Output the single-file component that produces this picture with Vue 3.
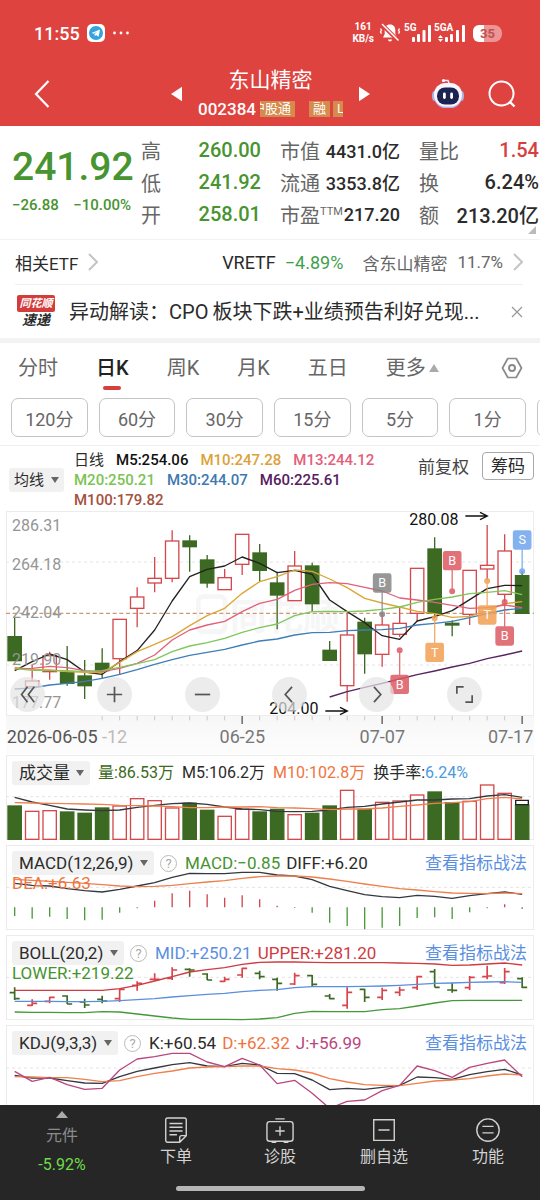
<template>
    <div class="app">
        <header class="header">
            <div class="status-bar">
                <span class="clock">11:55</span>
                <svg class="telegram" viewBox="0 0 18 18">
                    <rect width="18" height="18" rx="5" fill="#fff" />
                    <circle cx="9" cy="9" r="7" fill="#35a3dc" />
                    <path d="M4.6 9 L13 5.4 L11.6 12.8 L9 11 L7.8 12.2 L7.5 10.1 L10.8 7.3 L6.6 9.8 Z" fill="#fff" />
                </svg>
                <svg class="dots" viewBox="0 0 18 4" fill="#fff">
                    <circle cx="2.5" cy="2" r="1.4" />
                    <circle cx="9" cy="2" r="1.4" />
                    <circle cx="15.5" cy="2" r="1.4" />
                </svg>
                <span class="speed">161<br>KB/s</span>
                <svg class="bell" viewBox="0 0 22 20">
                    <path d="M11 1.500c-3.600 0-5.300 2.500-5.300 5.500v4L4 14.500h14L16.300 11V7c0-3-1.700-5.500-5.300-5.500z" fill="#fff" />
                    <path d="M9 16.500h4a2 2 0 0 1-4 0z" fill="#fff" />
                    <path d="M2.500 1 L19.500 18" stroke="#de433f" stroke-width="4" />
                    <path d="M3 1 L19.500 17.500" stroke="#fff" stroke-width="1.500" />
                    <path d="M1.500 5.500l1 1.700-1 1.700 1 1.700M20.500 5.500l-1 1.700 1 1.700-1 1.700" fill="none" stroke="#fff" stroke-width="1.300" />
                </svg>
                <svg class="signal" viewBox="0 0 29 20" fill="#fff">
                    <text x="0" y="8" class="net">5G</text>
                    <rect x="8" y="14" width="3" height="5" rx="1" />
                    <rect x="13" y="11" width="3" height="8" rx="1" />
                    <rect x="18.500" y="7" width="3" height="12" rx="1" />
                    <rect x="24" y="2" width="3" height="17" rx="1" />
                </svg>
                <svg class="signal wide" viewBox="0 0 32 20" fill="#fff">
                    <text x="0" y="8" class="net">5GA</text>
                    <path d="M4 15l2.500-3 2.500 3zM4 16l2.500 3 2.500-3z" />
                    <rect x="11" y="14" width="3" height="5" rx="1" />
                    <rect x="16" y="11" width="3" height="8" rx="1" />
                    <rect x="22" y="7" width="3" height="12" rx="1" />
                    <rect x="28" y="2" width="3" height="17" rx="1" />
                </svg>
                <span class="battery">35</span>
            </div>
            <div class="title-bar">
                <button type="button" class="icon-btn back" aria-label="返回">
                    <svg viewBox="0 0 16 28" fill="none" stroke="#fff" stroke-width="2.200">
                        <path d="M14.500 1 L2 14 L14.500 27" />
                    </svg>
                </button>
                <div class="stock">
                    <button type="button" class="icon-btn arrow" aria-label="上一只">
                        <svg viewBox="0 0 12 18" fill="#fff"><path d="M12 1v16L0 9z" /></svg>
                    </button>
                    <div class="stock-name">
                        <h1>东山精密</h1>
                        <div class="stock-code">
                            <span>002384</span>
                            <div class="tags">
                                <span class="tag first"><span>沪股通</span></span>
                                <span class="tag">融</span>
                                <span class="tag">L</span>
                            </div>
                        </div>
                    </div>
                    <button type="button" class="icon-btn arrow" aria-label="下一只">
                        <svg viewBox="0 0 12 18" fill="#fff"><path d="M0 1v16L12 9z" /></svg>
                    </button>
                </div>
                <button type="button" class="icon-btn robot" aria-label="智能助手">
                    <svg viewBox="0 0 34 32">
                        <path d="M13 2.500h4l1.500 4" fill="none" stroke="#f3e9f5" stroke-width="1.600" />
                        <circle cx="12.500" cy="2.500" r="1.600" fill="#fff" />
                        <ellipse cx="3.500" cy="18" rx="2.500" ry="5" fill="#a9b4ea" />
                        <ellipse cx="30.500" cy="18" rx="2.500" ry="5" fill="#a9b4ea" />
                        <rect x="3" y="6" width="28" height="24" rx="11.500" fill="#b9b2ee" />
                        <rect x="3" y="5" width="28" height="23.500" rx="11.500" fill="#f8f5fd" />
                        <rect x="6" y="9.500" width="22" height="17" rx="8" fill="#1b2350" />
                        <rect x="12" y="14.500" width="2.800" height="6.500" rx="1.400" fill="#fff" />
                        <rect x="19.200" y="14.500" width="2.800" height="6.500" rx="1.400" fill="#fff" />
                    </svg>
                </button>
                <button type="button" class="icon-btn search" aria-label="搜索">
                    <svg viewBox="0 0 28 28" fill="none" stroke="#fff" stroke-width="2">
                        <circle cx="13.500" cy="13.500" r="12" />
                        <path d="M22 22 L26.500 26.500" stroke-width="2.400" />
                    </svg>
                </button>
            </div>
        </header>

        <main class="content">
            <section class="quote">
                <div class="price">
                    <strong>241.92</strong>
                    <div class="change"><span>−26.88</span><span>−10.00%</span></div>
                </div>
                <dl class="stats">
                    <div v-for="item in stats" :key="item.label" class="stat">
                        <dt>{{ item.label }}<sup v-if="item.sup">{{ item.sup }}</sup></dt>
                        <dd :class="item.tone">{{ item.value }}</dd>
                    </div>
                </dl>
                <svg class="corner" viewBox="0 0 8 8"><path d="M8 0v8H0z" fill="#bbb" /></svg>
            </section>

            <a href="#" class="etf">
                <span class="etf-title">相关ETF</span>
                <svg class="chevron" viewBox="0 0 10 18"><path d="M1 1l8 8-8 8" /></svg>
                <span class="etf-name">VRETF</span>
                <span class="etf-change">−4.89%</span>
                <span class="etf-hold">含东山精密</span>
                <span class="etf-hold">11.7%</span>
                <svg class="chevron" viewBox="0 0 10 18"><path d="M1 1l8 8-8 8" /></svg>
            </a>

            <div class="news">
                <div class="news-logo">
                    <span class="logo-top">同花顺</span>
                    <span class="logo-bottom">速递</span>
                </div>
                <a href="#" class="news-text">异动解读：<span class="latin">CPO</span>板块下跌+业绩预告利好兑现...</a>
                <button type="button" class="icon-btn close" aria-label="关闭">
                    <svg viewBox="0 0 12 12" stroke="#999" stroke-width="1.300"><path d="M1 1l10 10M11 1L1 11" /></svg>
                </button>
            </div>

            <nav class="tabs">
                <button v-for="tab in tabs" :key="tab" type="button" :class="{ active: tab === activeTab }"
                    @click="activeTab = tab">{{ tab }}</button>
                <button type="button" class="more">更多<i></i></button>
                <button type="button" class="icon-btn setting" aria-label="设置">
                    <svg viewBox="0 0 22 22" fill="none" stroke="#8a8a8a">
                        <path d="M6.800 1.500h8.400l5.300 9.500-5.300 9.500H6.800L1.500 11z" stroke-width="1.700" stroke-linejoin="round" />
                        <circle cx="11" cy="11" r="3" stroke-width="2" />
                    </svg>
                </button>
            </nav>

            <div class="intervals">
                <button v-for="item in intervals" :key="item" type="button">{{ item }}</button>
                <button type="button" class="next" aria-label="更多周期"></button>
            </div>

            <div class="ma-bar">
                <div class="picker">
                    <select aria-label="主图指标"><option>均线</option></select>
                </div>
                <div class="ma-list">
                    <span class="period">日线</span>
                    <span v-for="ma in averages" :key="ma.key" :class="ma.key">{{ ma.text }}</span>
                </div>
                <button type="button" class="adjust">前复权</button>
                <button type="button" class="chips">筹码</button>
            </div>

            <!-- Candles -->
            <section class="panel">
                <svg class="plot" viewBox="18 18 1584 615">
                    <g class="watermark">
                        <rect x="595" y="275" width="80" height="105" rx="14" />
                        <text x="690" y="375">同花顺</text>
                    </g>
                    <path class="grid" d="M18 171H1602M18 480H1602" />
                    <path class="last-price" d="M18 325H1602" />
                    <g v-for="(c, i) in candles" :key="i" :class="c[0] === 'r' ? 'up' : 'down'">
                        <path :d="wick(c, i)" />
                        <rect :x="x(i) - 20" :y="c[2]" width="40" :height="c[3] - c[2]" />
                    </g>
                    <polyline v-for="line in priceLines" :key="line.color" class="line" :stroke="line.color"
                        :points="points(line.values, line.start)" />
                    <g v-for="(s, i) in signals" :key="'s' + i" class="signal-mark" :fill="s.color" :stroke="s.color">
                        <path :d="`M${x(s.at)} ${s.dot}V${s.box + 27}`" />
                        <circle :cx="x(s.at)" :cy="s.dot" r="7" />
                        <rect :x="x(s.at) - 26" :y="s.box" width="52" height="54" rx="5" />
                        <text :x="x(s.at)" :y="s.box + 40">{{ s.text }}</text>
                    </g>
                    <g class="scale">
                        <text x="36" y="78">286.31</text>
                        <text x="36" y="195">264.18</text>
                        <text x="36" y="338">242.04</text>
                        <text x="36" y="479">219.90</text>
                        <text x="36" y="608">177.77</text>
                    </g>
                    <g class="extreme">
                        <text x="1228" y="61">280.08</text>
                        <path d="M1396 33H1460M1440 22L1462 33L1440 44" />
                        <text x="808" y="628">204.00</text>
                        <path d="M976 618H1040M1020 607L1042 618L1020 629" />
                    </g>
                </svg>
                <div class="tools">
                    <button v-for="tool in tools" :key="tool.label" type="button" :aria-label="tool.label">
                        <svg viewBox="0 0 20 20"><path :d="tool.path" /></svg>
                    </button>
                </div>
            </section>

            <svg class="axis" viewBox="18 633 1584 114">
                <path v-for="i in 25" :key="i" :d="`M${x(i + 4)} 633v${majors.includes(i + 4) ? 24 : 13}`"
                    :class="{ major: majors.includes(i + 4) }" />
                <text x="20" y="715">2026-06-05</text>
                <text x="306" y="715" class="faded">-12</text>
                <text x="727" y="715" text-anchor="middle" class="mid">06-25</text>
                <text x="1147" y="715" text-anchor="middle" class="mid">07-07</text>
                <text x="1600" y="715" text-anchor="end" class="mid">07-17</text>
            </svg>

            <!-- Volume -->
            <section class="panel">
                <svg class="plot" viewBox="18 15 1584 255">
                    <path class="grid" d="M18 140H1602" />
                    <rect v-for="(v, i) in volumes" :key="i" :class="candles[i][0] === 'r' ? 'up' : 'down'"
                        :x="x(i) - 20" :y="v" width="40" :height="268 - v" />
                    <path d="M1547 164V151H1585V164Z" fill="#fff" stroke="#222" stroke-width="4" />
                    <polyline class="line" stroke="#34383f" :points="points(volumeM5)" />
                    <polyline class="line" stroke="#ef7f4d" :points="points(volumeM10)" />
                </svg>
                <div class="legend volume">
                    <div class="picker"><select aria-label="成交量指标"><option>成交量</option></select></div>
                    <span class="dark-green">量:86.53万</span>
                    <span>M5:106.2万</span>
                    <span class="orange">M10:102.8万</span>
                    <span>换手率:<b>6.24%</b></span>
                </div>
            </section>

            <!-- MACD -->
            <section class="panel">
                <svg class="plot" viewBox="18 285 1584 255">
                    <path class="grid" d="M18 412H1602" />
                    <path v-for="(v, i) in macdBars" :key="i" :d="`M${x(i)} 472V${v}`" stroke-width="4"
                        :stroke="v > 472 ? '#4b9a3c' : '#cf4750'" />
                    <polyline class="line" stroke="#34383f" :points="points(diff)" />
                    <polyline class="line" stroke="#ef7f4d" :points="points(dea)" />
                </svg>
                <div class="legend">
                    <div class="picker"><select aria-label="MACD 参数"><option>MACD(12,26,9)</option></select></div>
                    <button type="button" class="help">?</button>
                    <span class="green">MACD:−0.85</span>
                    <span>DIFF:+6.20</span>
                    <a href="#">查看指标战法</a>
                    <span class="second orange">DEA:+6.63</span>
                </div>
            </section>

            <!-- BOLL -->
            <section class="panel">
                <svg class="plot" viewBox="18 15 1584 255">
                    <path class="grid" d="M18 142H1602" />
                    <path v-for="(b, i) in bollBars" :key="i" :d="ohlc(b, i)" fill="none" stroke-width="5"
                        :stroke="candles[i][0] === 'r' ? '#d9434a' : '#3c6a22'" />
                    <polyline class="line" stroke="#cf3b40" :points="points(upper)" />
                    <polyline class="line" stroke="#5a8fe0" :points="points(mid)" />
                    <polyline class="line" stroke="#45993a" :points="points(lower)" />
                </svg>
                <div class="legend">
                    <div class="picker"><select aria-label="BOLL 参数"><option>BOLL(20,2)</option></select></div>
                    <button type="button" class="help">?</button>
                    <span class="blue">MID:+250.21</span>
                    <span class="red">UPPER:+281.20</span>
                    <a href="#">查看指标战法</a>
                    <span class="second green">LOWER:+219.22</span>
                </div>
            </section>

            <!-- KDJ -->
            <section class="panel">
                <svg class="plot" viewBox="18 285 1584 255">
                    <path class="grid" d="M18 414H1602" />
                    <polyline class="line" stroke="#34383f" :points="points(kLine)" />
                    <polyline class="line" stroke="#ef7f4d" :points="points(dLine)" />
                    <polyline class="line" stroke="#b9477f" :points="points(jLine)" />
                </svg>
                <div class="legend">
                    <div class="picker"><select aria-label="KDJ 参数"><option>KDJ(9,3,3)</option></select></div>
                    <button type="button" class="help">?</button>
                    <span>K:+60.54</span>
                    <span class="orange">D:+62.32</span>
                    <span class="magenta">J:+56.99</span>
                    <a href="#">查看指标战法</a>
                </div>
            </section>
        </main>

        <footer class="bottom">
            <div class="actions">
                <button type="button" class="sector">
                    <i></i>
                    <span>元件</span>
                    <em>-5.92%</em>
                </button>
                <button v-for="action in actions" :key="action.label" type="button">
                    <svg viewBox="0 0 30 28"><path :d="action.path" /></svg>
                    <span>{{ action.label }}</span>
                </button>
            </div>
            <div class="home-bar"></div>
        </footer>
    </div>
</template>

<script setup>
import { ref } from 'vue';

const activeTab = ref('日K');
const tabs = ['分时', '日K', '周K', '月K', '五日'];
const intervals = ['120分', '60分', '30分', '15分', '5分', '1分'];

const stats = [
    { label: '高', value: '260.00', tone: 'fall' },
    { label: '市值', value: '4431.0亿', tone: 'small' },
    { label: '量比', value: '1.54', tone: 'rise' },
    { label: '低', value: '241.92', tone: 'fall' },
    { label: '流通', value: '3353.8亿', tone: 'small' },
    { label: '换', value: '6.24%' },
    { label: '开', value: '258.01', tone: 'fall' },
    { label: '市盈', sup: 'TTM', value: '217.20', tone: 'small' },
    { label: '额', value: '213.20亿' },
];

const averages = [
    { key: 'm5', text: 'M5:254.06' },
    { key: 'm10', text: 'M10:247.28' },
    { key: 'm13', text: 'M13:244.12' },
    { key: 'm20', text: 'M20:250.21' },
    { key: 'm30', text: 'M30:244.07' },
    { key: 'm60', text: 'M60:225.61' },
    { key: 'm100', text: 'M100:179.82' },
];

// Plot units: three per pixel, one candle every 52.5
const x = (i) => 44 + i * 52.5;
const points = (values, start = 0) => values.map((v, i) => `${x(i + start)},${v}`).join(' ');
const wick = (c, i) => `M${x(i)} ${c[1]}V${c[2]}M${x(i)} ${c[3]}V${c[4]}`;
const ohlc = (b, i) => `M${x(i)} ${b[1]}V${b[2]}M${x(i) - 15} ${b[0]}H${x(i)}M${x(i)} ${b[3]}H${x(i) + 15}`;

// [direction, high, body top, body bottom, low]
const candles = [
    ['g', 335, 395, 467, 467], ['r', 478, 528, 545, 545], ['r', 440, 452, 500, 524], ['g', 423, 502, 535, 542],
    ['g', 465, 513, 542, 582], ['g', 430, 475, 497, 520], ['r', 343, 343, 461, 510], ['r', 247, 276, 310, 367],
    ['r', 156, 220, 234, 262], ['r', 76, 108, 220, 232], ['g', 91, 108, 125, 200], ['g', 150, 165, 234, 248],
    ['r', 192, 218, 254, 254], ['r', 88, 88, 178, 210], ['g', 117, 144, 196, 228], ['g', 200, 234, 270, 373],
    ['r', 138, 183, 287, 287], ['g', 173, 183, 296, 320], ['g', 408, 436, 466, 466], ['r', 325, 390, 542, 590],
    ['g', 338, 352, 446, 506], ['r', 325, 360, 448, 485], ['r', 305, 355, 388, 395], ['r', 190, 190, 325, 350],
    ['g', 97, 132, 325, 340], ['g', 346, 355, 360, 394], ['r', 196, 196, 328, 360], ['r', 60, 181, 192, 225],
    ['r', 88, 138, 268, 290], ['g', 199, 212, 325, 325],
];

const priceLines = [
    { color: '#222222', values: [497, 470, 447, 464, 501, 508, 470, 437, 375, 288, 215, 193, 183, 156, 175, 203, 196, 208, 285, 320, 353, 392, 403, 348, 335, 317, 284, 251, 241, 242] },
    { color: '#dba637', values: [487, 493, 495, 500, 502, 503, 472, 440, 418, 395, 362, 332, 310, 265, 230, 215, 195, 199, 222, 248, 280, 294, 306, 319, 326, 337, 334, 317, 296, 290] },
    { color: '#e2607a', values: [492, 490, 484, 488, 497, 500, 490, 475, 450, 405, 375, 360, 349, 320, 295, 283, 256, 238, 233, 236, 247, 258, 279, 285, 292, 301, 310, 308, 300, 308] },
    { color: '#7fc75b', values: [490, 496, 496, 497, 500, 497, 487, 476, 464, 440, 423, 413, 400, 382, 368, 357, 332, 320, 319, 320, 318, 313, 306, 292, 283, 276, 266, 262, 257, 269] },
    { color: '#3f7fb8', values: [552, 549, 540, 535, 529, 520, 508, 494, 478, 464, 451, 442, 433, 420, 408, 402, 390, 383, 382, 377, 375, 374, 370, 360, 355, 349, 338, 326, 315, 310] },
    { color: '#56265f', start: 18, values: [576, 560, 547, 535, 522, 509, 498, 486, 475, 461, 450, 438] },
];

const signals = [
    { at: 21, dot: 328, box: 207, text: 'B', color: '#858585' },
    { at: 22, dot: 436, box: 511, text: 'B', color: '#dc5a62' },
    { at: 24, dot: 340, box: 415, text: 'T', color: '#f2a054' },
    { at: 25, dot: 259, box: 140, text: 'B', color: '#dc5a62' },
    { at: 27, dot: 228, box: 303, text: 'T', color: '#f2a054' },
    { at: 28, dot: 291, box: 366, text: 'B', color: '#dc5a62' },
    { at: 29, dot: 199, box: 78, text: 'S', color: '#6fa5ec' },
];

const tools = [
    { label: '最左', path: 'M10 1L3 10L10 19M18 1L11 10L18 19' },
    { label: '放大', path: 'M10 1V19M1 10H19' },
    { label: '缩小', path: 'M1 10H19' },
    { label: '左移', path: 'M13 1L5 10L13 19' },
    { label: '右移', path: 'M7 1L15 10L7 19' },
    { label: '全屏', path: 'M1 9V1H9M19 11V19H11' },
];

const majors = [13, 21, 29];

const volumes = [168, 184, 182, 186, 190, 174, 168, 146, 152, 174, 160, 181, 199, 178, 186, 178, 194, 190, 168, 121, 178, 157, 153, 135, 126, 158, 154, 105, 130, 165];
const volumeM5 = [142, 156, 166, 177, 180, 182, 180, 172, 166, 161, 159, 163, 171, 177, 179, 184, 185, 184, 180, 172, 169, 162, 156, 150, 150, 147, 146, 138, 134, 142];
const volumeM10 = [158, 159, 160, 161, 162, 163, 166, 167, 168, 170, 173, 173, 171, 171, 170, 173, 174, 176, 179, 177, 177, 174, 169, 165, 160, 158, 155, 146, 142, 147];

const macdBars = [498, 506, 500, 507, 511, 509, 488, 475, 452, 430, 422, 433, 443, 436, 448, 467, 474, 488, 518, 528, 538, 533, 528, 504, 502, 507, 487, 475, 463, 477];
const diff = [400, 406, 408, 416, 422, 426, 418, 408, 398, 382, 370, 371, 371, 367, 367, 375, 378, 389, 409, 422, 434, 440, 443, 436, 439, 445, 437, 431, 426, 433];
const dea = [388, 391, 394, 397, 400, 404, 408, 410, 409, 406, 401, 396, 392, 385, 380, 378, 378, 381, 387, 394, 402, 409, 416, 420, 425, 429, 430, 431, 429, 431];

// [open, high, low, close]
const bollBars = [
    [188, 172, 210, 206], [226, 208, 228, 220], [214, 200, 220, 202], [198, 196, 222, 222], [216, 206, 234, 225],
    [208, 197, 220, 213], [206, 176, 216, 178], [166, 154, 182, 160], [148, 130, 152, 148], [145, 112, 150, 120],
    [118, 115, 140, 120], [132, 130, 150, 150], [154, 140, 156, 148], [135, 113, 143, 115], [130, 122, 148, 140],
    [148, 143, 182, 160], [162, 128, 165, 137], [137, 135, 168, 163], [198, 192, 208, 206], [226, 172, 236, 187],
    [178, 176, 216, 202], [202, 173, 210, 181], [187, 170, 198, 180], [173, 137, 180, 140], [125, 117, 172, 172],
    [180, 158, 188, 181], [173, 138, 180, 142], [140, 107, 148, 138], [158, 114, 162, 125], [146, 142, 174, 172],
];
const upper = [181, 181, 181, 181, 181, 181, 176, 166, 153, 140, 126, 119, 113, 103, 97, 96, 96, 97, 98, 98, 98, 98, 99, 100, 102, 106, 105, 102, 99, 105];
const mid = [214, 214, 214, 215, 215, 214, 212, 209, 206, 201, 197, 193, 190, 185, 181, 179, 173, 170, 170, 170, 169, 168, 166, 163, 160, 159, 157, 156, 155, 157];
const lower = [246, 247, 247, 248, 248, 245, 246, 252, 258, 264, 268, 268, 268, 269, 267, 263, 250, 244, 245, 245, 245, 239, 236, 228, 219, 212, 211, 211, 211, 211];

const kLine = [436, 444, 444, 452, 459, 460, 440, 424, 414, 404, 398, 408, 410, 400, 405, 430, 431, 450, 479, 475, 478, 472, 466, 441, 443, 448, 434, 425, 418, 435];
const dLine = [440, 441, 443, 443, 448, 455, 452, 440, 430, 423, 414, 411, 410, 408, 408, 416, 420, 429, 446, 456, 464, 466, 467, 460, 453, 450, 446, 438, 432, 435];
const jLine = [424, 454, 442, 464, 478, 475, 420, 387, 380, 370, 370, 396, 410, 385, 405, 461, 451, 490, 535, 514, 510, 482, 466, 408, 422, 442, 412, 400, 390, 440];

const actions = [
    { label: '下单', path: 'M6 1H24Q26 1 26 3V20L19 27H6Q4 27 4 25V3Q4 1 6 1ZM26 20H21Q19 20 19 22V27M8 7H22M8 11H22M8 15H22M8 19H16' },
    { label: '诊股', path: 'M4 5H26Q29 5 29 8V23Q29 26 26 26H4Q1 26 1 23V8Q1 5 4 5ZM10 2H20M15 10V20M10 15H20M6 27H11M19 27H24' },
    { label: '删自选', path: 'M4 3H26V25H4ZM9 14H21' },
    { label: '功能', path: 'M15 2A12 12 0 0 1 15 26A12 12 0 0 1 15 2ZM9 10H21M9 17H21' },
];
</script>

<style>
body {
    margin: 0;
    background: #fff;
}
</style>

<style scoped>
.app {
    display: flex;
    flex-direction: column;
    height: 100vh;
    overflow: hidden;
    background: #fff;
    color: #2b2b2b;
    font-family: Roboto, "Noto Sans CJK SC", sans-serif;
}

button,
select {
    margin: 0;
    padding: 0;
    border: none;
    background: none;
    color: inherit;
    font-family: inherit;
    cursor: pointer;
}

a {
    color: inherit;
    text-decoration: none;
}

svg {
    display: block;
}

.icon-btn svg {
    width: 100%;
    height: 100%;
}

/* Header */
.header {
    flex: none;
    height: 126px;
    background: #de433f;
    color: #fff;
}

.status-bar {
    display: flex;
    align-items: center;
    height: 66px;
    padding: 0 38px 0 34px;
}

.clock {
    font-size: 18px;
    font-weight: 500;
}

.telegram {
    width: 18px;
    margin-left: 7px;
}

.dots {
    width: 18px;
    margin: 0 auto 0 7px;
}

.speed {
    font-size: 10px;
    font-weight: 700;
    line-height: 12px;
    text-align: center;
}

.bell {
    width: 22px;
    margin-left: 5px;
}

.signal {
    width: 29px;
    margin-left: 3px;
}

.signal.wide {
    width: 32px;
    margin-left: 1px;
}

.net {
    font-size: 10px;
    font-weight: 700;
}

.battery {
    width: 29px;
    margin-left: 7px;
    border-radius: 6px 8px 8px 6px;
    background: linear-gradient(90deg, #fff 11px, #ee9494 11px);
    color: #bd5352;
    font-size: 13px;
    font-weight: 700;
    line-height: 17px;
    text-align: center;
}

.title-bar {
    display: flex;
    align-items: center;
    height: 56px;
    padding: 0 24px 0 34px;
}

.back {
    width: 16px;
    height: 28px;
}

.stock {
    display: flex;
    flex: 1;
    align-items: center;
    justify-content: center;
    gap: 16px;
    padding-left: 60px;
}

.arrow {
    width: 11px;
    height: 18px;
}

.stock-name h1 {
    margin: 0;
    font-size: 21px;
    font-weight: 400;
    line-height: 30px;
    text-align: center;
}

.stock-code {
    display: flex;
    align-items: center;
    gap: 4px;
    font-size: 17px;
    font-weight: 500;
    line-height: 28px;
}

.tags {
    display: flex;
    gap: 3px;
    width: 83px;
    overflow: hidden;
    white-space: nowrap;
}

.tag {
    flex: none;
    padding: 0 4px;
    background: #d58b4b;
    font-size: 13px;
    font-weight: 400;
    line-height: 16px;
}

.tag.first {
    display: flex;
    justify-content: flex-end;
    width: 31px;
    margin-right: 11px;
    padding-left: 0;
    overflow: hidden;
}

.robot {
    width: 34px;
    height: 32px;
    margin-right: 23px;
}

.search {
    width: 28px;
    height: 28px;
}

/* Quote */
.content {
    flex: 1;
    min-height: 0;
    overflow: hidden;
}

.quote {
    position: relative;
    display: flex;
    gap: 10px;
    height: 114px;
    padding: 0 1px 0 12px;
    border-bottom: 1px solid #f2f2f2;
    box-sizing: border-box;
}

.price {
    width: 119px;
    color: #479430;
}

.price strong {
    display: block;
    padding-top: 18px;
    font-size: 39px;
    font-weight: 500;
    line-height: 46px;
}

.change {
    display: flex;
    justify-content: space-between;
    font-size: 15px;
    font-weight: 500;
    line-height: 30px;
}

.stats {
    display: grid;
    flex: 1;
    grid-template-columns: repeat(3, 1fr);
    grid-auto-rows: 32px;
    column-gap: 19px;
    margin: 0;
    padding-top: 8px;
}

.stat {
    display: flex;
    align-items: center;
    justify-content: space-between;
    font-size: 20px;
    white-space: nowrap;
}

.stat dt {
    color: #666;
}

.stat sup {
    font-size: 11px;
    line-height: 11px;
}

.stat dd {
    margin: 0;
    font-weight: 500;
}

.stat .fall {
    color: #479430;
}

.stat .rise {
    color: #d63f3f;
}

.stat .small {
    font-size: 18px;
}

.corner {
    position: absolute;
    right: 4px;
    bottom: 5px;
    width: 8px;
}

.etf {
    display: flex;
    align-items: center;
    height: 44px;
    margin: 0 17px 0 15px;
    border-bottom: 1px solid #f0f0f0;
    font-size: 17px;
}

.chevron {
    width: 10px;
    height: 18px;
    margin-left: 10px;
    fill: none;
    stroke: #c4c4c4;
    stroke-width: 2;
}

.etf-name {
    margin-left: auto;
    font-size: 18px;
}

.etf-change {
    margin: 0 9px;
    color: #3f9f4d;
    font-size: 18px;
}

.etf-hold {
    margin-left: 10px;
    color: #666;
}

.news {
    display: flex;
    align-items: center;
    height: 53px;
    padding: 0 17px;
    border-bottom: 5px solid #f3f3f3;
}

.news-logo {
    width: 38px;
    font-weight: 700;
    font-style: italic;
    text-align: center;
}

.logo-top {
    display: block;
    border-radius: 2px;
    background: #d23c3b;
    color: #fff;
    font-size: 11px;
    line-height: 17px;
}

.logo-bottom {
    display: block;
    font-size: 14px;
    line-height: 16px;
}

.news-text {
    flex: 1;
    min-width: 0;
    margin-left: 14px;
    font-size: 20px;
    line-height: 28px;
    white-space: nowrap;
}

.news-text .latin {
    margin-right: 4px;
}

.close {
    width: 12px;
    height: 12px;
}

/* Period */
.tabs {
    display: flex;
    gap: 38px;
    height: 49px;
    padding: 0 17px 0 18px;
}

.tabs button {
    position: relative;
    color: #666;
    font-size: 20px;
    line-height: 48px;
    white-space: nowrap;
}

.tabs .active {
    color: #222;
    font-weight: 500;
}

.tabs .active::after {
    content: "";
    position: absolute;
    bottom: 2px;
    left: calc(50% - 9px);
    width: 18px;
    height: 4px;
    border-radius: 2px;
    background: #d63f3b;
}

.more i {
    display: inline-block;
    margin-left: 3px;
    border: 5px solid transparent;
    border-top: none;
    border-bottom: 8px solid #aaa;
    vertical-align: 3px;
}

.tabs .setting {
    align-self: center;
    width: 22px;
    height: 22px;
    margin-left: auto;
}

.intervals {
    display: grid;
    grid-template-columns: repeat(6, 1fr) 3px;
    gap: 11px;
    padding: 6px 0 8px 11px;
    border-bottom: 1px solid #f0f0f0;
    overflow: hidden;
}

.intervals button {
    height: 39px;
    border: 1px solid #c4c4c4;
    border-radius: 7px;
    color: #666;
    font-size: 18px;
    box-sizing: border-box;
}

.intervals .next {
    width: 77px;
}

.picker {
    display: flex;
    align-items: center;
    flex: none;
    height: 24px;
    padding: 0 6px 0 7px;
    border-radius: 3px;
    background: #f1f1f1;
}

.picker::after {
    content: "";
    margin-left: 6px;
    border: 4px solid transparent;
    border-top: 6px solid #666;
    border-bottom: none;
}

.picker select {
    appearance: none;
    font-size: 17px;
    line-height: 24px;
}

.ma-bar {
    display: flex;
    align-items: flex-start;
    height: 65px;
    padding: 0 6px 0 9px;
    box-sizing: border-box;
}

.ma-bar .picker {
    margin-top: 22px;
    padding: 0 5px;
}

.ma-bar .picker select {
    font-size: 15px;
}

.ma-list {
    display: flex;
    flex: 1;
    flex-wrap: wrap;
    column-gap: 12px;
    margin: 4px 20px 0 10px;
    font-size: 15px;
    font-weight: 500;
    line-height: 20px;
}

.period { font-weight: 400; }
.m5 { color: #111; }
.m10 { color: #dba23a; }
.m13 { color: #e2607a; }
.m20 { color: #7cc353; }
.m30 { color: #4078b0; }
.m60 { color: #56205f; }
.m100 { color: #a4513f; }

.adjust {
    color: #444;
    font-size: 17px;
    line-height: 42px;
}

.chips {
    height: 28px;
    margin: 6px 0 0 13px;
    padding: 0 8px;
    border: 1px solid #aaa;
    border-radius: 4px;
    font-size: 17px;
    line-height: 24px;
    box-sizing: border-box;
}

/* Charts */
.panel {
    display: grid;
    margin: 0 6px 5px;
    box-shadow: inset 0 0 0 1px #ececec;
}

.plot,
.legend,
.tools {
    grid-area: 1 / 1;
}

.plot {
    width: 100%;
    height: auto;
    overflow: visible;
}

.grid {
    fill: none;
    stroke: #e4e4e4;
    stroke-width: 3;
    stroke-dasharray: 9 9;
}

.last-price {
    stroke: #c99a75;
    stroke-width: 4;
    stroke-dasharray: 12 8;
}

.watermark {
    fill: none;
    stroke: #f6f6f6;
    stroke-width: 14;
}

.watermark text {
    fill: #f6f6f6;
    stroke: none;
    font-size: 110px;
    font-weight: 700;
}

.up {
    fill: #fff;
    stroke: #d44a4c;
    stroke-width: 4;
}

.down {
    fill: #3c6a22;
    stroke: #3c6a22;
    stroke-width: 4;
}

.line {
    fill: none;
    stroke-width: 4;
    stroke-linejoin: round;
}

.signal-mark {
    stroke-width: 4;
    opacity: 0.85;
}

.signal-mark text {
    fill: #fff;
    stroke: none;
    font-size: 38px;
    text-anchor: middle;
}

.scale {
    fill: #959595;
    font-size: 48px;
}

.extreme {
    fill: #111;
    font-size: 48px;
}

.extreme path {
    fill: none;
    stroke: #111;
    stroke-width: 4;
}

.tools {
    display: grid;
    align-self: end;
    grid-template-columns: repeat(6, 1fr);
    margin: 0 0 4px 4px;
    z-index: 1;
}

.tools button {
    width: 35px;
    height: 35px;
    padding: 9px;
    border-radius: 50%;
    background: rgba(228, 228, 228, 0.7);
}

.tools svg {
    width: 17px;
    fill: none;
    stroke: #555;
    stroke-width: 2;
}

.axis {
    width: calc(100% - 12px);
    margin: -5px 6px 1px;
    background: linear-gradient(#f7f7f7, #fdfdfd);
    font-size: 54px;
    fill: #555;
}

.axis path {
    stroke: #c8c8c8;
    stroke-width: 3;
}

.axis .major {
    stroke: #777;
    stroke-width: 5;
}

.axis .mid {
    fill: #777;
}

.axis .faded {
    fill: #bbb;
}

.legend {
    display: flex;
    flex-wrap: wrap;
    align-content: flex-start;
    align-items: center;
    column-gap: 6px;
    padding: 6px 7px 0 6px;
    font-size: 17px;
    line-height: 24px;
}

.legend.volume {
    column-gap: 8px;
    font-size: 16px;
}

.legend b {
    color: #4a9ae0;
    font-weight: 400;
}

.legend a {
    margin-left: auto;
    color: #5a8fe0;
}

.legend .second {
    width: 100%;
    line-height: 16px;
}

.help {
    width: 17px;
    height: 17px;
    margin-right: 2px;
    border: 1px solid #bbb;
    border-radius: 50%;
    color: #aaa;
    font-size: 13px;
    line-height: 15px;
    box-sizing: border-box;
}

.dark-green { color: #3c6a22; }
.green { color: #45942f; }
.orange { color: #ef7440; }
.blue { color: #5a8fe0; }
.red { color: #cf3b40; }
.magenta { color: #b9477f; }

/* Bottom bar */
.bottom {
    position: relative;
    flex: none;
    height: 95px;
    background: #262626;
    color: #d2d2d2;
}

.actions {
    display: grid;
    grid-template-columns: 124fr repeat(4, 104fr);
    height: 81px;
}

.actions button {
    display: flex;
    flex-direction: column;
    align-items: center;
    padding-top: 12px;
    font-size: 16px;
    line-height: 24px;
}

.actions svg {
    width: 28px;
    margin-bottom: 2px;
    fill: none;
    stroke: #d2d2d2;
    stroke-width: 1.5;
}

.actions .sector {
    padding-top: 6px;
    color: #8b8b8f;
}

.sector i {
    margin-bottom: 6px;
    border: 6px solid transparent;
    border-top: none;
    border-bottom: 7px solid #aaa;
}

.sector em {
    margin-top: 5px;
    color: #6fdc4b;
    font-style: normal;
}

.home-bar {
    width: 35%;
    height: 5px;
    margin: 0 auto;
    border-radius: 3px;
    background: #b5b5b5;
}
</style>
